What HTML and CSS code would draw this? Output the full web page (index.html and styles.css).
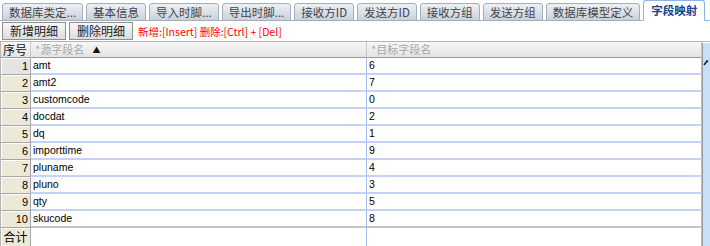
FILE: index.html
```html
<!DOCTYPE html>
<html lang="zh-CN">
<head>
<meta charset="UTF-8">
<title>字段映射</title>
<link rel="stylesheet" href="styles.css">
</head>
<body>
<div class="tabs">
  <div class="tab">数据库类定...</div>
  <div class="tab">基本信息</div>
  <div class="tab">导入时脚...</div>
  <div class="tab">导出时脚...</div>
  <div class="tab">接收方ID</div>
  <div class="tab">发送方ID</div>
  <div class="tab">接收方组</div>
  <div class="tab">发送方组</div>
  <div class="tab">数据库模型定义</div>
  <div class="tab active">字段映射</div>
</div>
<div class="toolbar">
  <button class="btn">新增明细</button>
  <button class="btn">删除明细</button>
  <span class="hint">新增:[Insert] 删除:[Ctrl] + [Del]</span>
</div>
<div class="grid">
  <div class="sheet">
    <div class="row head">
      <div class="cell num">序号</div>
      <div class="cell">*源字段名 <span class="sort">&#9650;</span></div>
      <div class="cell">*目标字段名</div>
    </div>
    <div class="row current"><div class="cell num">1</div><div class="cell">amt</div><div class="cell">6</div></div>
    <div class="row"><div class="cell num">2</div><div class="cell">amt2</div><div class="cell">7</div></div>
    <div class="row"><div class="cell num">3</div><div class="cell">customcode</div><div class="cell">0</div></div>
    <div class="row"><div class="cell num">4</div><div class="cell">docdat</div><div class="cell">2</div></div>
    <div class="row"><div class="cell num">5</div><div class="cell">dq</div><div class="cell">1</div></div>
    <div class="row"><div class="cell num">6</div><div class="cell">importtime</div><div class="cell">9</div></div>
    <div class="row"><div class="cell num">7</div><div class="cell">pluname</div><div class="cell">4</div></div>
    <div class="row"><div class="cell num">8</div><div class="cell">pluno</div><div class="cell">3</div></div>
    <div class="row"><div class="cell num">9</div><div class="cell">qty</div><div class="cell">5</div></div>
    <div class="row last"><div class="cell num">10</div><div class="cell">skucode</div><div class="cell">8</div></div>
    <div class="row foot"><div class="cell num">合计</div><div class="cell"></div><div class="cell"></div></div>
  </div>
  <div class="scrollbar">
    <svg width="7" height="8" viewBox="0 0 7 8"><path d="M1 6 L4 2 L5 3" fill="none" stroke="#222" stroke-width="1.6"/></svg>
  </div>
</div>
</body>
</html>
```

FILE: styles.css
```css
body {
  margin: 0;
  background-color: #fff;
  font-family: "Liberation Sans", Arial, "Noto Sans CJK SC", sans-serif;
  font-size: 12px;
  color: #000;
  overflow: hidden;
}

/* tab strip */
.tabs {
  display: flex;
  align-items: flex-end;
  gap: 3px;
  height: 20px;
  padding-left: 2px;
  border-bottom: 1px solid #8db2e3;
}

.tab {
  height: 16px;
  line-height: 16px;
  padding: 0 6px;
  margin-bottom: -1px;
  border: 1px solid #a3afbd;
  border-radius: 3px 3px 0 0;
  background: linear-gradient(#edf1f5, #c9d1da);
  color: #444;
  font-family: "Noto Sans CJK SC", sans-serif;
  font-size: 11.5px;
  white-space: nowrap;
}

.tab.active {
  height: 19px;
  line-height: 19px;
  border-color: #8db2e3;
  border-bottom-color: #fff;
  background: #fff;
  color: #15428b;
  font-weight: bold;
  padding: 0 7px;
}

/* toolbar */
.toolbar {
  display: flex;
  align-items: center;
  gap: 3px;
  height: 20px;
  padding-left: 2px;
}

.btn {
  height: 18px;
  padding: 0 7px;
  margin: 0;
  border: 1px solid #8f8f8f;
  border-radius: 0;
  background: linear-gradient(#f8f8f8, #dcdcdc);
  font-family: "Noto Sans CJK SC", sans-serif;
  font-size: 12px;
  line-height: 16px;
  color: #222;
}

.hint {
  margin-left: 2px;
  color: #f00;
  font-family: "Noto Sans CJK SC", sans-serif;
  font-size: 10.5px;
}

/* grid */
.grid {
  display: flex;
  border-top: 1px solid #b5b5b5;
}

.sheet {
  width: 703px;
  border-left: 1px solid #b5b5b5;
  box-sizing: border-box;
}

.row {
  display: grid;
  grid-template-columns: 30px 336px 1fr;
  height: 17px;
}

.cell {
  box-sizing: border-box;
  padding-left: 2px;
  border-bottom: 2px solid #c4d2fa;
  border-right: 1px solid #a9bdf3;
  font-size: 10.5px;
  line-height: 15px;
  white-space: nowrap;
  overflow: hidden;
}

.cell.num {
  padding: 0 2px 0 0;
  text-align: right;
  background-color: #ece9d8;
  border-right: 1px solid #a5a5a5;
  border-bottom: 1px solid #a5a5a5;
  box-shadow: inset 1px 1px #fff;
  font-size: 11px;
  line-height: 16px;
}

.current .num {
  background-color: #e4e4e4;
}

.last .cell {
  border-bottom-color: #c4c4c4;
}

.last .num {
  border-bottom-color: #a5a5a5;
}

/* header */
.head {
  height: 16px;
  background: linear-gradient(#f7f7f7, #e2e2e2);
}

.head .cell {
  padding-left: 4px;
  border-bottom: 1px solid #9a9a9a;
  border-right: 1px solid #c8c8c8;
  font-family: "Noto Sans CJK SC", sans-serif;
  font-size: 11px;
  line-height: 15px;
  color: #a8a8a8;
  overflow: visible;
}

.head .cell.num {
  padding: 0 0 0 2px;
  text-align: left;
  background: none;
  box-shadow: none;
  color: #111;
  font-size: 12px;
}

.sort {
  margin-left: 6px;
  font-size: 8px;
  color: #111;
  vertical-align: 1px;
}

/* footer */
.foot {
  height: 19px;
}

.foot .cell {
  border-bottom: none;
}

.foot .cell.num {
  padding: 0;
  text-align: center;
  font-family: "Noto Sans CJK SC", sans-serif;
  font-size: 12px;
  line-height: 18px;
}

.scrollbar {
  flex: 1;
  height: 210px;
  margin-top: 1px;
  background-color: #c8dff8;
  border-left: 1px solid #9a9a9a;
}

.scrollbar svg {
  display: block;
  margin-top: 16px;
}
```
